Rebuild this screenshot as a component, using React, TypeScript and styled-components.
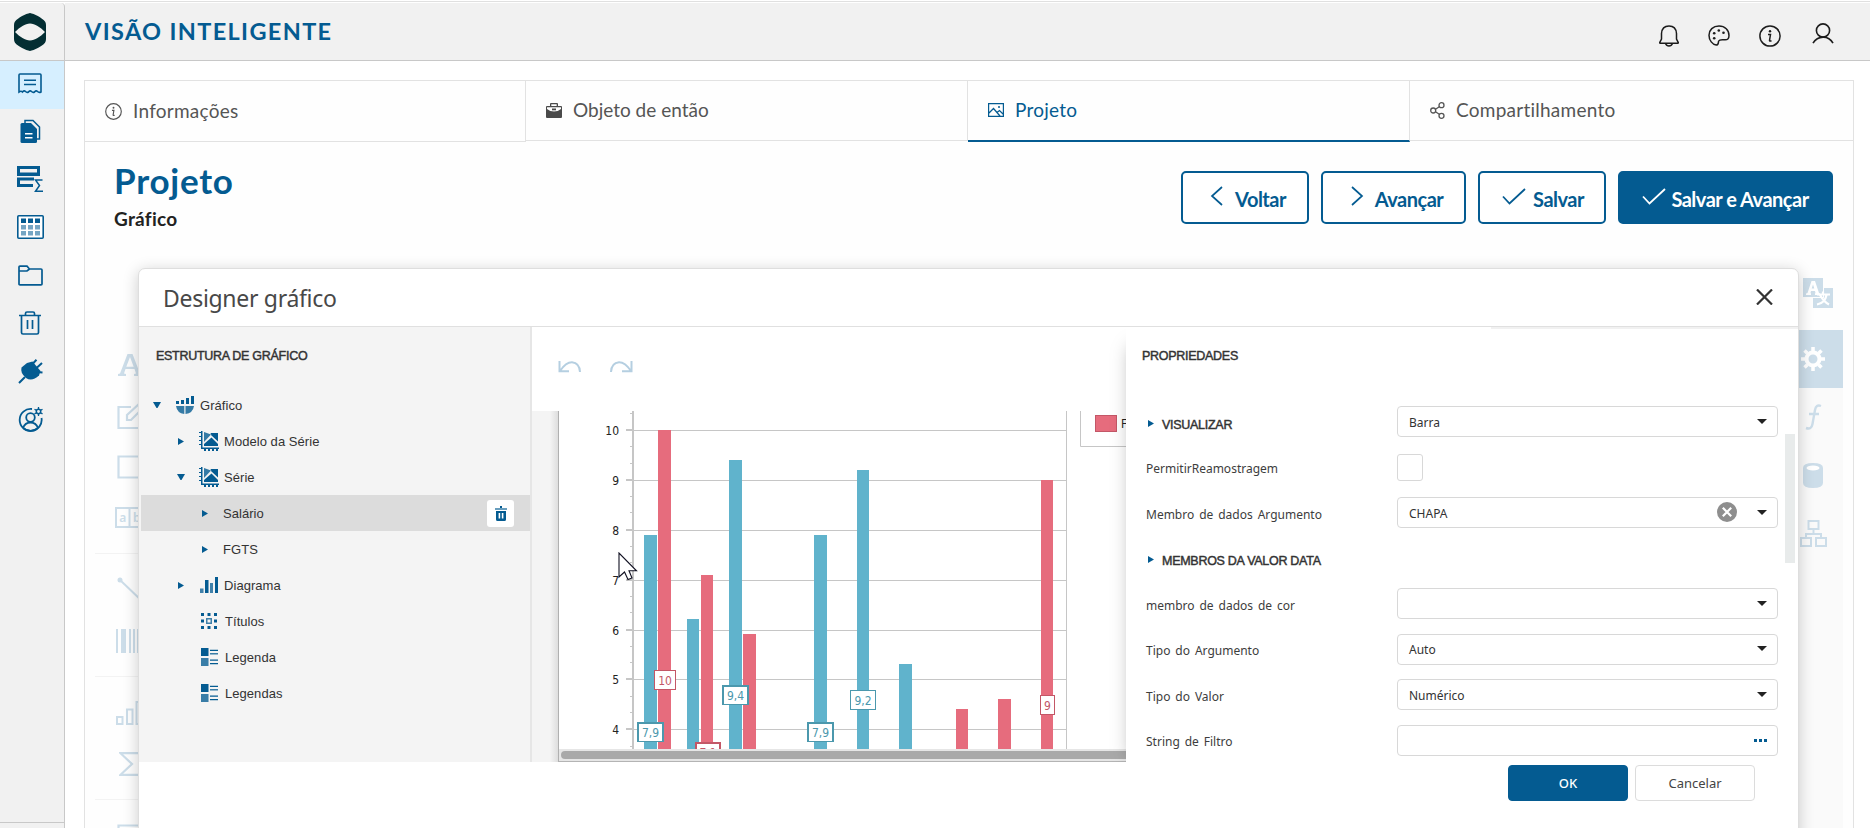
import React from "react";
import styled, { createGlobalStyle, css } from "styled-components";

const BLUE = "#045b91";
const FADED = "#ccdde9";

const GlobalStyle = createGlobalStyle`
  *, *::before, *::after { box-sizing: border-box; }
  body { margin: 0; background: #fff; overflow: hidden; }
  svg { display: block; flex: none; }
`;

/* ---------- page shell ---------- */

const Page = styled.div`
  position: relative;
  display: flex;
  flex-direction: column;
  width: 1870px;
  height: 828px;
  overflow: hidden;
  font-family: Lato, "Liberation Sans", sans-serif;
  color: #333;
`;

const TopStrip = styled.div`
  flex: none;
  height: 3px;
  background: linear-gradient(#fff 1px, #e0e0e0 1px, #e0e0e0 2px, #fff 2px);
`;

const Shell = styled.div`
  display: flex;
  flex: 1;
  min-height: 0;
`;

const Sidebar = styled.nav`
  display: flex;
  flex-direction: column;
  flex: none;
  width: 65px;
  background: #f1f1f1;
  border-right: 1px solid #c8c8c8;
  border-top-right-radius: 4px;
`;

const LogoBox = styled.div`
  height: 58px;
  padding: 10px 0 0 14px;
  border-bottom: 1px solid #c8c8c8;
`;

const NavItem = styled.div<{ $active?: boolean }>`
  display: flex;
  align-items: center;
  justify-content: center;
  height: 48px;
  padding: 0 4px 4px 0;
  background: ${(p) => (p.$active ? "#d6efff" : "transparent")};
`;

const SidebarFoot = styled.div`
  height: 6px;
  margin-top: auto;
  border-top: 1px solid #c8c8c8;
`;

const Main = styled.div`
  display: flex;
  flex-direction: column;
  flex: 1;
  min-width: 0;
`;

const Header = styled.header`
  display: flex;
  align-items: center;
  justify-content: space-between;
  flex: none;
  height: 58px;
  padding: 0 36px 0 20px;
  background: #f1f1f1;
  border-bottom: 1px solid #c8c8c8;
`;

const AppTitle = styled.h1`
  margin: 0 0 1px;
  font-size: 23.5px;
  font-weight: 700;
  letter-spacing: 1.35px;
  line-height: 30px;
  color: ${BLUE};
`;

const HeaderIcons = styled.div`
  display: flex;
  align-items: center;
  gap: 29px;
  padding-top: 8px;
`;

const Raised = styled.span`
  margin: -4px 0 0 2px;
`;

/* ---------- wizard panel ---------- */

const Panel = styled.section`
  display: flex;
  flex-direction: column;
  flex: 1;
  margin: 19px 16px 0 19px;
  border: 1px solid #e2e2e2;
  border-bottom: 0;
  background: #fefefe;
`;

const Tabs = styled.div`
  display: flex;
  align-items: flex-start;
  flex: none;
  height: 61px;
`;

const Tab = styled.div<{ $active?: boolean; $tall?: boolean; $last?: boolean }>`
  display: flex;
  align-items: center;
  flex: ${(p) => (p.$last ? "1" : "none")};
  width: ${(p) => (p.$tall ? 441 : 442)}px;
  height: ${(p) => (p.$active || p.$tall ? 61 : 60)}px;
  padding: ${(p) => (p.$tall ? "0 0 0 20px" : "0 0 1px 20px")};
  gap: 11px;
  font-size: 19px;
  letter-spacing: ${(p) => (p.$active || p.$tall || p.$last ? 0.25 : 0)}px;
  line-height: 24px;
  color: ${(p) => (p.$active ? BLUE : "#555")};
  border-right: ${(p) => (p.$last ? "0" : "1px solid #e2e2e2")};
  border-bottom: ${(p) => (p.$active ? `2px solid ${BLUE}` : "1px solid #e2e2e2")};
`;

const Heading = styled.div`
  display: flex;
  justify-content: space-between;
  align-items: flex-start;
  flex: none;
  height: 122px;
  padding: 29px 20px 0 29px;
`;

const HeadingTitle = styled.h2`
  margin: -11px 0 0;
  font-size: 35px;
  font-weight: 700;
  line-height: 40px;
  letter-spacing: 0.75px;
  color: ${BLUE};
`;

const HeadingSub = styled.div`
  margin-top: 7px;
  font-size: 19px;
  font-weight: 700;
  line-height: 24px;
  letter-spacing: 0.25px;
  color: #222;
`;

const Actions = styled.div`
  display: flex;
  gap: 12px;
`;

const ActionButton = styled.button<{ $width: number; $primary?: boolean; $shift?: number }>`
  display: flex;
  align-items: center;
  justify-content: center;
  width: ${(p) => p.$width}px;
  height: 53px;
  padding: 3px 0 0 ${(p) => p.$shift ?? 0}px;
  border: 2px solid ${BLUE};
  border-radius: 5px;
  background: ${(p) => (p.$primary ? BLUE : "#fff")};
  color: ${(p) => (p.$primary ? "#fff" : BLUE)};
  font: 700 20px/24px Lato, sans-serif;
  letter-spacing: -0.5px;
  white-space: nowrap;
  svg { margin: -6px ${(p) => (p.$primary ? 5 : 7)}px 0 0; }
`;

const Workspace = styled.div`
  display: flex;
  justify-content: space-between;
  flex: 1;
  min-height: 0;
  overflow: hidden;
`;

const Toolbox = styled.div`
  width: 80px;
  padding: 75px 0 0 10px;
`;

const ToolSlot = styled.div`
  display: flex;
  align-items: center;
  justify-content: center;
  height: 51px;
`;

const ToolRule = styled.div`
  height: 1px;
  margin: 10px 0;
  background: #f3f3f3;
`;

const SideTools = styled.div`
  display: flex;
  flex-direction: column;
  width: 60px;
  margin-right: 10px;
`;

const SideSlot = styled.div<{ $active?: boolean; $first?: boolean }>`
  display: flex;
  align-items: center;
  justify-content: center;
  flex: none;
  height: 58px;
  margin-bottom: ${(p) => (p.$first ? 8 : 0)}px;
  padding-left: ${(p) => (p.$first ? 10 : 0)}px;
  background: ${(p) => (p.$active ? FADED : p.$first ? "transparent" : "#fafafa")};
`;

const SideFill = styled.div`
  flex: 1;
  background: #fafafa;
`;

/* ---------- dialog ---------- */

const Dialog = styled.div`
  position: absolute;
  left: 138px;
  top: 268px;
  display: flex;
  flex-direction: column;
  width: 1661px;
  height: 580px;
  background: #fff;
  border: 1px solid #dedede;
  border-radius: 7px;
  box-shadow: 0 3px 16px rgba(0, 0, 0, 0.2);
  overflow: hidden;
  font-family: "Noto Sans", sans-serif;
`;

const DialogHeader = styled.div`
  display: flex;
  align-items: center;
  justify-content: space-between;
  flex: none;
  height: 58px;
  padding: 0 25px 2px 24px;
  border-bottom: 1px solid #e0e0e0;
`;

const DialogTitle = styled.div`
  margin-top: 2px;
  font-size: 23px;
  letter-spacing: -0.3px;
  color: #484848;
`;

const DialogBody = styled.div`
  display: flex;
  flex: none;
  height: 435px;
`;

const sectionText = css`
  font-family: "Liberation Sans", Arial, sans-serif;
  font-size: 12.5px;
  line-height: 16px;
  letter-spacing: -0.28px;
  color: #333;
  -webkit-text-stroke: 0.45px #333;
`;

const StructurePane = styled.div`
  width: 393px;
  padding-top: 21px;
  background: #f4f4f4;
  border-right: 2px solid #e6e6e6;
`;

const PaneTitle = styled.div<{ $indent: number }>`
  ${sectionText}
  padding-left: ${(p) => p.$indent}px;
`;

const Tree = styled.div`
  margin-top: 23px;
`;

const TreeRow = styled.div<{ $level: number; $selected?: boolean }>`
  display: flex;
  align-items: center;
  height: 36px;
  margin-left: 2px;
  padding: 0 16px 0 ${(p) => 12 + p.$level * 24}px;
  background: ${(p) => (p.$selected ? "#dcdcdc" : "transparent")};
  font-family: "Liberation Sans", Arial, sans-serif;
  font-size: 13px;
  letter-spacing: 0.05px;
  color: #333;
`;

const ArrowCell = styled.span<{ $right?: boolean }>`
  display: flex;
  align-items: center;
  width: 22px;
  padding-left: ${(p) => (p.$right ? 1 : 0)}px;
`;

const IconCell = styled.span<{ $wide?: boolean }>`
  display: flex;
  align-items: center;
  justify-content: center;
  width: 20px;
  margin-right: ${(p) => (p.$wide ? 6 : 5)}px;
`;

const TreeText = styled.span`
  flex: 1;
  white-space: pre;
`;

const DeleteButton = styled.span`
  display: flex;
  align-items: center;
  justify-content: center;
  width: 27px;
  height: 27px;
  margin-top: 1px;
  border-radius: 3px;
  background: #fff;
`;

const DesignPane = styled.div`
  display: flex;
  flex-direction: column;
  width: 594px;
`;

const History = styled.div`
  display: flex;
  gap: 27px;
  height: 84px;
  padding: 34px 0 0 26px;
`;

const Surface = styled.div`
  display: flex;
  height: 351px;
  padding-left: 26px;
  background: linear-gradient(to right, #f4f4f4 18px, #dedede 26px);
`;

const Sheet = styled.div`
  display: flex;
  flex-direction: column;
  flex: 1;
  border-left: 1px solid #b0b0b0;
  border-bottom: 1px solid #b4b4b4;
  background: #fff;
`;

const ScrollTrack = styled.div`
  height: 12px;
  padding: 2px 0 0 2px;
  background: #e6e6e6;
`;

const ScrollThumb = styled.div`
  height: 8px;
  border-radius: 4px 0 0 4px;
  background: #a9a9a9;
`;

const PropertiesPane = styled.div`
  position: relative;
  z-index: 1;
  flex: 1;
  padding: 21px 0 0 16px;
  background: linear-gradient(#f1f1f1, #f1f1f1) 365px 0 / 100% 2px no-repeat #fff;
  box-shadow: -7px 8px 18px -12px rgba(0, 0, 0, 0.34);
  clip-path: inset(0 0 0 -24px);
`;

const PropertyLayout = styled.div`
  display: flex;
`;

const PropertyGrid = styled.div`
  display: grid;
  grid-template-columns: 255px 381px;
  grid-auto-rows: 45.5px;
  align-items: start;
  margin-top: 42px;
`;

const Caption = styled.div`
  display: flex;
  align-items: center;
  height: 32px;
  padding: 2px 0 0 4px;
  font-size: 12px;
  word-spacing: 1.8px;
  white-space: nowrap;
  color: #3d3d3d;
`;

const SectionCaption = styled.div`
  ${sectionText}
  display: flex;
  align-items: center;
  gap: 8px;
  height: 32px;
  padding: 5px 0 0 6px;
  white-space: nowrap;
  svg { margin-top: -3px; }
`;

const Field = styled.div`
  display: flex;
  align-items: center;
  height: 31px;
  padding: 0 10px 0 11px;
  border: 1px solid #d8d8d8;
  border-radius: 4px;
  background: #fff;
  font-size: 12px;
  color: #333;
`;

const FieldText = styled.span`
  flex: 1;
  padding-top: 1px;
`;

const FieldIcons = styled.span`
  display: flex;
  align-items: center;
  gap: 20px;
  margin-top: -1px;
`;

const CheckBox = styled.div`
  width: 26px;
  height: 27px;
  margin-top: 2px;
  border: 1px solid #d8d8d8;
  border-radius: 3px;
  background: #fff;
`;

const VScroll = styled.div`
  width: 10px;
  height: 129px;
  margin: 70px 0 0 7px;
  background: #e8ebeb;
`;

const Footer = styled.div`
  display: flex;
  justify-content: flex-end;
  gap: 7px;
  padding: 3px 43px 0 0;
`;

const FooterButton = styled.button<{ $primary?: boolean }>`
  width: 120px;
  height: 36px;
  padding: 0;
  border: 1px solid ${(p) => (p.$primary ? BLUE : "#dcdcdc")};
  border-radius: 4px;
  background: ${(p) => (p.$primary ? BLUE : "#fff")};
  color: ${(p) => (p.$primary ? "#fff" : "#444")};
  font: ${(p) => (p.$primary ? 500 : 400)} 13px/18px "Noto Sans", sans-serif;
`;

const Pointer = styled.div`
  position: absolute;
  left: 618px;
  top: 552px;
`;

/* ---------- drawings ---------- */

type IconProps = { w: number; h: number; vb?: string; c?: string; fill?: boolean; sw?: number; children: React.ReactNode };
const Icon = ({ w, h, vb, c = BLUE, fill, sw = 1.5, children }: IconProps) => (
  <svg width={w} height={h} viewBox={vb ?? `0 0 ${w} ${h}`} fill={fill ? c : "none"} stroke={fill ? "none" : c} strokeWidth={sw}>
    {children}
  </svg>
);

const Logo = () => (
  <Icon w={32} h={38} c="#032e33" fill>
    <path
      fillRule="evenodd"
      d="M16 0C20 .6 28 4.600 31 8.600Q32 10 32 12V26Q32 28.500 31 29.800C28 33.500 20 37.400 16 38C12 37.400 4 33.500 1 29.800Q0 28.500 0 26V12Q0 10 1 8.600C4 4.600 12 .6 16 0ZM1 19C6 14 11 10.700 16 10.500C21 10.700 26 14 31 19C26 24 21 27.300 16 27.500C11 27.300 6 24 1 19Z"
    />
  </Icon>
);

const ReceiptIcon = () => (
  <Icon w={26} h={22} sw={1.6}>
    <path d="M2 20V3Q2 2 3 2H23Q24 2 24 3V20Q22 21 20.500 19.500T17.500 20Q16 21 14.500 19.500T11.500 20Q10 21 8.500 19.500T5.500 20Q4 18.500 2 20ZM7 8.200H19M7 12.500H19" />
  </Icon>
);
const DocsIcon = () => (
  <Icon w={21} h={25}>
    <path d="M5 4V1.500H13L19.500 8V20H17" />
    <path fill={BLUE} stroke="none" d="M2 4H11L17 10V22.500Q17 24 15.500 24H2Q.5 24 .5 22.500V5.500Q.5 4 2 4Z" />
    <path stroke="#fff" strokeWidth="1.400" d="M5 14.800H12.500M5 18.800H12.500" />
  </Icon>
);
const RowsSumIcon = () => (
  <Icon w={26} h={27} sw={1.5}>
    <path fill={BLUE} stroke="none" fillRule="evenodd" d="M0 0H23V10H0ZM3 3H20V6.500H3Z" />
    <path fill={BLUE} stroke="none" d="M0 11.500H17V14.500H3V18H16V21H0Z" />
    <path d="M25.500 14H18.500L22.500 19.500L18.500 25.200H26" />
  </Icon>
);
const TableIcon = () => (
  <Icon w={27} h={24} sw={1.6}>
    <rect x=".8" y=".8" width="25.400" height="22.400" rx="1" fill="#fff" />
    {[4, 11, 18].map((x) => (
      <g key={x} fill={BLUE} stroke="none">
        <rect x={x} y="3.500" width="5" height="4.500" />
        <rect x={x} y="10" width="5" height="4.500" opacity=".55" />
        <rect x={x} y="16" width="5" height="4.500" opacity=".55" />
      </g>
    ))}
  </Icon>
);
const FolderIcon = () => (
  <Icon w={25} h={21} sw={1.7}>
    <path d="M1 19V2Q1 1.200 2 1.200H9L11.500 4H23Q24 4 24 5V19Q24 19.800 23 19.800H2Q1 19.800 1 19ZM1 6H9L11.500 4" />
  </Icon>
);
const BinIcon = () => (
  <Icon w={22} h={24} sw={1.7}>
    <path d="M0 4.500H22M6.500 4.500V2.500Q6.500 1 8 1H14Q15.500 1 15.500 2.500V4.500M2.500 5V21.500Q2.500 23 4 23H18Q19.500 23 19.500 21.500V5M8.500 9V18M13.500 9V18" />
  </Icon>
);
const PlugIcon = () => (
  <Icon w={25} h={25} sw={2}>
    <path fill={BLUE} stroke="none" d="M9 4L14.500 2.500L22.500 12L21 16.500Q14 23 8 19Q2 14 3.500 8.500Z" />
    <path d="M1 24L7 18M14 5.500L18.500 .8M18.500 9L24 4M19 13L24.500 13.500" />
  </Icon>
);
const UserGearIcon = () => (
  <Icon w={25} h={25} sw={1.8}>
    <path d="M14 2A11 11 0 1 0 23.500 11" />
    <circle cx="12.500" cy="10.500" r="4.300" />
    <path d="M5 21Q7 15.500 12.500 15.500T20 21M5 21Q12 27 20 21" />
    <circle cx="20.500" cy="4.500" r="2.200" strokeWidth="1.500" />
    <path strokeWidth="1.300" d="M20.500 0V2M20.500 7V9M16.500 2.200L18.500 3.400M22.500 5.700L24.500 6.900M24.500 2.200L22.500 3.400M18.500 5.700L16.500 6.900" />
  </Icon>
);

const BellIcon = () => (
  <Icon w={20} h={22} c="#1c1c1c" sw={1.5}>
    <path d="M2.500 14V8.500Q3 1 10 1T17.500 8.500V14L19.300 17.600Q19.500 18.300 18.800 18.300H1.200Q.5 18.300 .7 17.600ZM6.500 18.500Q7.500 21 10 21T13.500 18.500" />
  </Icon>
);
const PaletteIcon = () => (
  <Icon w={22} h={21} c="#1c1c1c" sw={1.5}>
    <path d="M11 1C5 1 1 5 1 10.200C1 15.500 4.500 19.500 8.200 20C11 20 10 17.500 10.700 16C11.500 14.300 14 14.500 16.500 14.800C19.500 15 21 14 21 10.500C21 5 17 1 11 1Z" />
    <g fill="#1c1c1c" stroke="none">
      <circle cx="6.200" cy="8.300" r="1.300" /><circle cx="10.800" cy="5.500" r="1.300" /><circle cx="15.500" cy="7.800" r="1.300" /><circle cx="6.200" cy="13.300" r="1.300" />
    </g>
  </Icon>
);
const InfoIcon = ({ size, c, sw = 1.5 }: { size: number; c: string; sw?: number }) => (
  <Icon w={size} h={size} vb="0 0 22 22" c={c} sw={sw}>
    <circle cx="11" cy="11" r="10.100" />
    <path d="M9 9.500H11.500L10.500 15.500Q10.500 16.500 12.500 15.800" />
    <circle cx="11" cy="6.200" r="1.200" fill={c} stroke="none" />
  </Icon>
);
const PersonIcon = () => (
  <Icon w={22} h={21} c="#1c1c1c" sw={1.6}>
    <circle cx="11" cy="7.500" r="6.600" />
    <path d="M1 20.200Q4.500 14.300 11 14.100T21 20.200" />
  </Icon>
);

const CaseIcon = () => (
  <Icon w={16} h={15} c="#4a4a4a" fill>
    <path fillRule="evenodd" d="M4 3V1Q4 0 5 0H11Q12 0 12 1V3H15Q16 3 16 4V14Q16 15 15 15H1Q0 15 0 14V4Q0 3 1 3ZM5.300 3H10.700V1.300H5.300ZM1 4.200V6Q4 8.500 8 8.500T15 6V4.200Z" />
    <rect x="6" y="5.500" width="4" height="1.800" />
  </Icon>
);
const PictureIcon = () => (
  <Icon w={16} h={14} sw={1.2}>
    <path d="M.6 .6H15.400V13.400H.6ZM1 10L5.500 5.500L12 13M9 9.500L11.500 7.500L15 11" />
    <circle cx="11" cy="4" r="1" fill={BLUE} stroke="none" />
  </Icon>
);
const ShareIcon = () => (
  <Icon w={15} h={17} c="#555" sw={1.3}>
    <circle cx="3.200" cy="8.500" r="2.500" /><circle cx="11.500" cy="3.200" r="2.500" /><circle cx="11.500" cy="13.800" r="2.500" />
    <path d="M5.500 7.300L9.300 4.700M5.500 9.700L9.300 12.300" />
  </Icon>
);

const Check = ({ c }: { c: string }) => <Icon w={24} h={17} c={c} sw={1.8}><path d="M1 8.500L7.500 15.500L23 1" /></Icon>;
const Chevron = ({ right }: { right?: boolean }) => (
  <Icon w={18} h={20} sw={1.7}><path d={right ? "M2 1L12 10L2 19" : "M12 1L2 10L12 19"} /></Icon>
);

const CloseIcon = () => <Icon w={17} h={16} c="#333" sw={2.2}><path d="M1 .5L16 15.500M16 .5L1 15.500" /></Icon>;
const ArrowDown = () => <Icon w={8} h={6} fill><path d="M0 0H8L4.500 6H3.500Z" /></Icon>;
const ArrowRight = () => <Icon w={6} h={7} fill><path d="M0 0L6 3.500L0 7Z" /></Icon>;
const Caret = () => <Icon w={10} h={5} c="#222" fill><path d="M0 0H10L5 5Z" /></Icon>;

const ChartIcon = () => (
  <Icon w={18} h={18} fill>
    <path d="M0 5H3V8H0ZM5 4H8V8H5ZM10 2H13V8H10ZM15 0H18V8H15Z" />
    <path opacity=".8" d="M0 10H8.300V18Q1 17 0 10ZM9.500 10H18Q17 17 9.500 18Z" />
  </Icon>
);
const SeriesIcon = () => (
  <Icon w={20} h={20} fill>
    <path d="M2 0H3.500V16.500H20V18H2Z" />
    <path d="M0 1H2V2H0ZM0 5H2V6H0ZM0 9H2V10H0ZM0 13H2V14H0ZM5 18H7V20H5ZM9 18H11V20H9ZM13 18H15V20H13ZM17 18H19V20H17Z" />
    <path d="M5 15V13L12.500 6.500L19 13V15Z" />
    <path opacity=".8" d="M5 1L12 3.500L5 11Z" />
    <path d="M11.500 2H19V10.500L12.500 4.500Z" />
  </Icon>
);
const DiagramIcon = () => (
  <Icon w={18} h={16} fill>
    <path opacity=".75" d="M0 11.500H3.500V16H0ZM10 6H13V16H10Z" /><path d="M5 3H8.500V16H5ZM15 0H18V16H15Z" />
  </Icon>
);
const TitlesIcon = () => (
  <Icon w={16} h={16} fill>
    <path d="M0 0H3V3H0ZM6.500 0H9.500V3H6.500ZM13 0H16V3H13ZM0 6.500H3V9.500H0ZM13 6.500H16V9.500H13ZM0 13H3V16H0ZM6.500 13H9.500V16H6.500ZM13 13H16V16H13Z" />
    <path opacity=".75" fillRule="evenodd" d="M5 5H11V11H5ZM6.500 6.500V9.500H9.500V6.500Z" />
  </Icon>
);
const LegendIcon = () => (
  <Icon w={17} h={18} fill>
    <path d="M0 0H7.500V8H0ZM9 1.800H17V3H9ZM9 11.500H17V12.700H9ZM9 15H17V16.200H9Z" />
    <path opacity=".78" d="M0 10H7.500V18H0ZM9 5H17V6.500H9Z" />
  </Icon>
);
const SmallBin = () => (
  <Icon w={12} h={15} fill>
    <path opacity=".6" d="M0 2H12V4H0Z" />
    <path fillRule="evenodd" d="M5 0H7V2H5ZM1 5H11V13.500Q11 15 9.500 15H2.500Q1 15 1 13.500ZM3.600 7V12.500H5.200V7ZM6.800 7V12.500H8.400V7Z" />
  </Icon>
);

const Undo = ({ flip }: { flip?: boolean }) => (
  <Icon w={24} h={12} c="#b5cfe1" sw={2}>
    <path transform={flip ? "translate(24 0) scale(-1 1)" : undefined} d="M1.500 0V10.200H11M2 10Q8 1.200 14 1.300Q21.500 2 22 11" />
  </Icon>
);

const PointerShape = () => (
  <svg width="20" height="29" viewBox="0 0 20 29">
    <path d="M1 1V25L6.500 20L10 27.500L14 26L11 18.800H18.500Z" fill="#fff" stroke="#111122" strokeWidth="1.100" />
  </svg>
);

/* Translucent tools that sit behind the dialog. */
const TextTool = () => (
  <Icon w={24} h={22} c={FADED} fill>
    <path fillRule="evenodd" d="M0 22V20L2 19.500L9.500 0H14.500L22 19.500L24 20V22H16V20L18 19.500L16.500 15H7.500L6 19.500L8 20V22ZM8.300 12.700H15.700L12 3Z" />
  </Icon>
);
const EditTool = () => <Icon w={26} h={26} c={FADED} sw={2.2}><path d="M14 4H1.500V25H23V14M10 17V12L22 1L26 5L14 17Z" /></Icon>;
const PanelTool = () => <Icon w={26} h={24} c={FADED} sw={2.2}><path d="M1.500 1.500H25V22.500H1.500Z" /></Icon>;
const CharTool = () => (
  <Icon w={30} h={21} c={FADED} sw={2}>
    <path d="M1 1H29V20H1ZM14.500 1V20" />
    <text x="4.200" y="15" fill={FADED} stroke="none" fontFamily="Noto Sans" fontWeight="600" fontSize="12">a</text>
    <text x="18" y="15" fill={FADED} stroke="none" fontFamily="Noto Sans" fontWeight="600" fontSize="12">b</text>
  </Icon>
);
const LineTool = () => <Icon w={26} h={26} c={FADED} sw={2}><circle cx="3" cy="3" r="1.500" fill={FADED} /><path d="M3 3L25 24" /></Icon>;
const BarcodeTool = () => <Icon w={28} h={24} c={FADED} fill><path d="M0 0H2V24H0ZM5 0H10V24H5ZM13 0H15V24H13ZM17 0H19V24H17ZM21 0H23V24H21ZM25 0H28V24H25Z" /></Icon>;
const ChartTool = () => <Icon w={28} h={24} c={FADED} sw={2}><path d="M1 16H6.500V23H1ZM11 8.500H16.500V23H11ZM20.500 1H26V23H20.500Z" /></Icon>;
const SumTool = () => <Icon w={22} h={24} c={FADED} sw={2.200}><path d="M21 5V1.200H1.500L13 12L1.500 22.800H21V19" /></Icon>;

const TranslateTool = () => (
  <Icon w={30} h={30} c={FADED} fill>
    <path d="M0 0H20V19H0Z" /><path d="M21 10H30V30H10V20H21Z" />
    <path fill="#fff" fillRule="evenodd" d="M3 17V15.500L4.500 15L8.500 3H12L16 15L17 15.500V17H12V15.500L12.500 15L12 13H8L7.500 15L8 15.500V17ZM8.700 10.500H11.300L10 6.500Z" />
    <path stroke="#fff" strokeWidth="2.200" fill="none" d="M14 16.500H27M20 13.500V16M14 26.500Q22 25 23.500 17M17 17Q21 24 26 26.500" />
  </Icon>
);
const GearTool = () => (
  <Icon w={24} h={24} c="#fff" sw={4}>
    <circle cx="12" cy="12" r="6.500" />
    <path strokeWidth="3.500" d="M12 0V4M12 20V24M0 12H4M20 12H24M3.500 3.500L6.300 6.300M17.700 17.700L20.500 20.500M20.500 3.500L17.700 6.300M6.300 17.700L3.500 20.500" />
  </Icon>
);
const FxTool = () => <Icon w={17} h={26} c={FADED} sw={2.4}><path d="M16 2Q11 0 10 6L7.500 20Q6.500 26 1 24M4 10H14" /></Icon>;
const DataTool = () => (
  <Icon w={20} h={25} c={FADED} fill>
    <path d="M0 5Q0 0 10 0T20 5V20Q20 25 10 25T0 20Z" /><ellipse cx="10" cy="5" rx="6.500" ry="2.600" fill="#fff" />
  </Icon>
);
const TreeTool = () => <Icon w={27} h={27} c={FADED} sw={2}><path d="M8.500 1H18.500V9H8.500ZM13.500 9V14M6 18V14H21V18M1 18H11V26H1ZM16 18H26V26H16Z" /></Icon>;

/* ---------- chart ---------- */

const TEAL = "#60b3cc";
const ROSE = "#e66c7d";
const TEAL_LINE = "#4b98ad";
const ROSE_LINE = "#c35767";

// Coordinates are relative to the sheet, whose origin is the plot's clip corner.
const gridLines: [string, number][] = [["10", 19], ["9", 69], ["8", 119], ["7", 169], ["6", 219], ["5", 268], ["4", 318]];
const minorTicks = [2, 35, 52, 85, 101, 135, 151, 185, 201, 235, 251, 285, 301, 335];
const bars: [number, number, number, string][] = [
  [85, 13, 124, TEAL], [99, 13, 19, ROSE], [128, 12, 208, TEAL], [142, 12, 164, ROSE],
  [170, 13, 49, TEAL], [184, 13, 223, ROSE], [255, 13, 124, TEAL], [298, 12, 59, TEAL],
  [340, 13, 253, TEAL], [397, 12, 298, ROSE], [439, 13, 288, ROSE], [482, 12, 69, ROSE],
];
const tags: [string, number, number, number, boolean, boolean][] = [
  ["7,9", 78, 311, 27, true, true], ["10", 95, 259, 22, false, false], ["7,1", 136, 331, 26, false, true],
  ["9,4", 163, 274, 27, true, true], ["7,9", 248, 311, 27, true, true], ["9,2", 291, 279, 26, true, false],
  ["9", 481, 284, 15, false, false],
];

const Plot = () => (
  <svg width="567" height="338" viewBox="0 0 567 338" fontFamily="'DejaVu Sans Condensed', 'DejaVu Sans', sans-serif" fontStretch="condensed" fontSize="12">
    {gridLines.map(([label, y]) => (
      <g key={label}>
        <rect x="75" y={y} width="432" height="1" fill="#c6c6c6" />
        <rect x="67" y={y - 1} width="8" height="2" fill="#c6c6c6" />
        <text x="60" y={y + 5} textAnchor="end" fill="#222">{label}</text>
      </g>
    ))}
    {minorTicks.map((y) => <rect key={y} x="71" y={y} width="3" height="1" fill="#c6c6c6" />)}
    <rect x="73" y="0" width="2" height="338" fill="#c6c6c6" />
    <rect x="507" y="0" width="1" height="338" fill="#c6c6c6" />
    {bars.map(([x, w, y, c]) => <rect key={x} x={x} y={y} width={w} height={338 - y} fill={c} />)}
    {tags.map(([t, x, y, w, teal, heavy]) => {
      const line = teal ? TEAL_LINE : ROSE_LINE;
      return (
        <g key={x}>
          <rect x={x} y={y} width={w} height="20" fill={line} />
          <rect x={x + (heavy ? 2 : 1)} y={y + (heavy ? 2 : 1)} width={w - (heavy ? 4 : 2)} height={heavy ? 17 : 18} fill="#fff" />
          <text x={x + w / 2} y={y + 15} textAnchor="middle" fill={line}>{t}</text>
        </g>
      );
    })}
    <path d="M521.500 0V35.500H567" fill="none" stroke="#c6c6c6" />
    <rect x="536.500" y="4.500" width="21" height="16" fill={ROSE} stroke={ROSE_LINE} />
    <text x="562" y="17" fill="#222">FGTS</text>
  </svg>
);

/* ---------- data ---------- */

type Node = { text: string; level: number; arrow?: "down" | "right"; icon?: React.ReactNode; noIcon?: boolean; selected?: boolean; wide?: boolean };
const nodes: Node[] = [
  { text: "Gráfico", level: 0, arrow: "down", icon: <ChartIcon /> },
  { text: "Modelo da Série", level: 1, arrow: "right", icon: <SeriesIcon /> },
  { text: "Série", level: 1, arrow: "down", icon: <SeriesIcon /> },
  { text: "Salário", level: 2, arrow: "right", noIcon: true, selected: true },
  { text: "FGTS", level: 2, arrow: "right", noIcon: true },
  { text: "Diagrama", level: 1, arrow: "right", icon: <DiagramIcon /> },
  { text: "Títulos", level: 1, icon: <TitlesIcon />, wide: true },
  { text: "Legenda", level: 1, icon: <LegendIcon />, wide: true },
  { text: "Legendas", level: 1, icon: <LegendIcon />, wide: true },
];

const SelectField = ({ value, clearable }: { value: string; clearable?: boolean }) => (
  <Field>
    <FieldText>{value}</FieldText>
    <FieldIcons>
      {clearable && (
        <Icon w={20} h={20} c="#fff" sw={2.2}>
          <circle cx="10" cy="10" r="10" fill="#8e8e8e" stroke="none" />
          <path d="M5.800 5.800L14.200 14.200M14.200 5.800L5.800 14.200" />
        </Icon>
      )}
      <Caret />
    </FieldIcons>
  </Field>
);

export default function App() {
  return (
    <Page>
      <GlobalStyle />
      <TopStrip />
      <Shell>
        <Sidebar>
          <LogoBox><Logo /></LogoBox>
          <NavItem $active><ReceiptIcon /></NavItem>
          <NavItem><DocsIcon /></NavItem>
          <NavItem><RowsSumIcon /></NavItem>
          <NavItem><TableIcon /></NavItem>
          <NavItem><FolderIcon /></NavItem>
          <NavItem><BinIcon /></NavItem>
          <NavItem><PlugIcon /></NavItem>
          <NavItem><UserGearIcon /></NavItem>
          <SidebarFoot />
        </Sidebar>
        <Main>
          <Header>
            <AppTitle>VISÃO INTELIGENTE</AppTitle>
            <HeaderIcons>
              <BellIcon />
              <PaletteIcon />
              <InfoIcon size={22} c="#1c1c1c" />
              <Raised><PersonIcon /></Raised>
            </HeaderIcons>
          </Header>
          <Panel>
            <Tabs>
              <Tab $tall><InfoIcon size={17} c="#555" />Informações</Tab>
              <Tab><CaseIcon />Objeto de então</Tab>
              <Tab $active><PictureIcon />Projeto</Tab>
              <Tab $last><ShareIcon />Compartilhamento</Tab>
            </Tabs>
            <Heading>
              <div>
                <HeadingTitle>Projeto</HeadingTitle>
                <HeadingSub>Gráfico</HeadingSub>
              </div>
              <Actions>
                <ActionButton $width={128} $shift={6}><Chevron />Voltar</ActionButton>
                <ActionButton $width={145} $shift={6}><Chevron right />Avançar</ActionButton>
                <ActionButton $width={128} $shift={2}><Check c={BLUE} />Salvar</ActionButton>
                <ActionButton $width={215} $primary><Check c="#fff" />Salvar e Avançar</ActionButton>
              </Actions>
            </Heading>
            <Workspace>
              <Toolbox>
                <ToolSlot><TextTool /></ToolSlot>
                <ToolSlot><EditTool /></ToolSlot>
                <ToolSlot><PanelTool /></ToolSlot>
                <ToolSlot><CharTool /></ToolSlot>
                <ToolRule />
                <ToolSlot><LineTool /></ToolSlot>
                <ToolSlot><BarcodeTool /></ToolSlot>
                <ToolRule />
                <ToolSlot><ChartTool /></ToolSlot>
                <ToolSlot><SumTool /></ToolSlot>
                <ToolRule />
                <ToolSlot><PanelTool /></ToolSlot>
              </Toolbox>
              <SideTools>
                <SideSlot $first><TranslateTool /></SideSlot>
                <SideSlot $active><GearTool /></SideSlot>
                <SideSlot><FxTool /></SideSlot>
                <SideSlot><DataTool /></SideSlot>
                <SideSlot><TreeTool /></SideSlot>
                <SideFill />
              </SideTools>
            </Workspace>
          </Panel>
        </Main>
      </Shell>

      <Dialog>
        <DialogHeader>
          <DialogTitle>Designer gráfico</DialogTitle>
          <CloseIcon />
        </DialogHeader>
        <DialogBody>
          <StructurePane>
            <PaneTitle $indent={17}>ESTRUTURA DE GRÁFICO</PaneTitle>
            <Tree>
              {nodes.map((n) => (
                <TreeRow key={n.text} $level={n.level} $selected={n.selected}>
                  <ArrowCell $right={n.arrow === "right"}>{n.arrow === "down" ? <ArrowDown /> : n.arrow === "right" ? <ArrowRight /> : null}</ArrowCell>
                  {!n.noIcon && <IconCell $wide={n.wide}>{n.icon}</IconCell>}
                  <TreeText>{n.text}</TreeText>
                  {n.selected && <DeleteButton><SmallBin /></DeleteButton>}
                </TreeRow>
              ))}
            </Tree>
          </StructurePane>
          <DesignPane>
            <History><Undo /><Undo flip /></History>
            <Surface>
              <Sheet>
                <Plot />
                <ScrollTrack><ScrollThumb /></ScrollTrack>
              </Sheet>
            </Surface>
          </DesignPane>
          <PropertiesPane>
            <PaneTitle $indent={0}>PROPRIEDADES</PaneTitle>
            <PropertyLayout>
              <PropertyGrid>
                <SectionCaption><ArrowRight />VISUALIZAR</SectionCaption>
                <SelectField value="Barra" />
                <Caption>PermitirReamostragem</Caption>
                <CheckBox />
                <Caption>Membro de dados Argumento</Caption>
                <SelectField value="CHAPA" clearable />
                <SectionCaption><ArrowRight />MEMBROS DA VALOR DATA</SectionCaption>
                <span />
                <Caption>membro de dados de cor</Caption>
                <SelectField value="" />
                <Caption>Tipo do Argumento</Caption>
                <SelectField value="Auto" />
                <Caption>Tipo do Valor</Caption>
                <SelectField value="Numérico" />
                <Caption>String de Filtro</Caption>
                <Field>
                  <FieldText />
                  <Icon w={13} h={3} fill><path d="M0 0H3V3H0ZM5 0H8V3H5ZM10 0H13V3H10Z" /></Icon>
                </Field>
              </PropertyGrid>
              <VScroll />
            </PropertyLayout>
          </PropertiesPane>
        </DialogBody>
        <Footer>
          <FooterButton $primary>OK</FooterButton>
          <FooterButton>Cancelar</FooterButton>
        </Footer>
      </Dialog>
      <Pointer><PointerShape /></Pointer>
    </Page>
  );
}
